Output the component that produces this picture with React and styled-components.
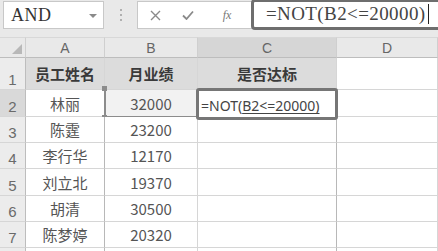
import React from "react";
import styled, { createGlobalStyle } from "styled-components";

const Global = createGlobalStyle`
  html, body { margin: 0; padding: 0; background: #ffffff; }
  body { font-family: "Noto Sans CJK SC", "Noto Sans", sans-serif; }
  * { box-sizing: border-box; }
`;

const Page = styled.div`
  width: 438px;
  height: 251px;
  overflow: hidden;
  background: #fff;
  display: flex;
  flex-direction: column;
`;

const Toolbar = styled.div`
  height: 37px;
  background: #e9e9e9;
  display: flex;
  align-items: flex-start;
  padding: 1px 0 0 3px;
  flex-shrink: 0;
`;

const NameBox = styled.div`
  width: 101px;
  height: 28px;
  background: #fff;
  border: 1px solid #c8c8c8;
  display: flex;
  align-items: center;
  justify-content: space-between;
  padding: 0 6px 0 7px;
  font-family: "Liberation Serif", serif;
  font-size: 18px;
  color: #333;
  letter-spacing: 0.5px;
`;

const Caret = styled.span`
  width: 0;
  height: 0;
  border-left: 4px solid transparent;
  border-right: 4px solid transparent;
  border-top: 4px solid #8a8a8a;
  margin-top: 1px;
`;

const Dots = styled.div`
  width: 33px;
  height: 28px;
  display: flex;
  flex-direction: column;
  align-items: center;
  justify-content: center;
  gap: 3px;
  span {
    width: 2px;
    height: 2px;
    background: #b0b0b0;
  }
`;

const FormulaArea = styled.div`
  flex: 1;
  height: 28px;
  background: #fff;
  border: 1px solid #c8c8c8;
  border-right: none;
  display: flex;
  align-items: center;
  position: relative;
`;

const IconSlot = styled.div`
  width: ${(p) => p.w}px;
  height: 28px;
  display: flex;
  align-items: center;
  justify-content: center;
  color: #8a8a8a;
`;

const Fx = styled.span`
  font-family: "Liberation Serif", serif;
  font-style: italic;
  font-size: 12px;
  color: #777;
`;

const FormulaInput = styled.div`
  flex: 1;
  height: 31px;
  margin-top: -2px;
  margin-right: -4px;
  border: 3px solid #6e6e6e;
  border-radius: 4px;
  background: #fff;
  display: flex;
  align-items: center;
  padding-left: 12px;
  font-family: "Liberation Serif", serif;
  font-size: 19px;
  letter-spacing: 0.4px;
  color: #444;
  white-space: nowrap;
`;

const TextCursor = styled.span`
  display: inline-block;
  width: 1px;
  height: 20px;
  background: #222;
  margin-left: 2px;
`;

const Sheet = styled.div`
  display: grid;
  grid-template-columns: 26px 79px 93px 139px 101px;
  grid-template-rows: 21px 32px 27px 26px 26px 27px 26px 26px 26px;
  flex: 1;
`;

const Cell = styled.div`
  position: relative;
  border-right: 1px solid ${(p) => (p.strong ? "#b8b8b8" : "#d6d6d6")};
  border-bottom: 1px solid #d6d6d6;
  display: flex;
  align-items: center;
  justify-content: center;
  font-size: 15px;
  font-weight: ${(p) => (p.bold ? 700 : 400)};
  color: ${(p) => (p.bold ? "#3a3a3a" : "#555")};
  background: ${(p) => p.bg || "#fff"};
  white-space: nowrap;
`;

const ColHead = styled.div`
  border-right: 1px solid #cfcfcf;
  border-bottom: 1px solid #bdbdbd;
  border-top: 1px solid #d8d8d8;
  background: ${(p) => (p.active ? "#d6d6d6" : "#e9e9e9")};
  display: flex;
  align-items: center;
  justify-content: center;
  font-family: "Liberation Sans", sans-serif;
  font-size: 14px;
  color: #666;
  position: relative;
`;

const Corner = styled(ColHead)`
  &::after {
    content: "";
    position: absolute;
    right: 3px;
    bottom: 3px;
    width: 0;
    height: 0;
    border-left: 10px solid transparent;
    border-bottom: 10px solid #b8b8b8;
  }
`;

const RowHead = styled.div`
  border-right: 1px solid #bdbdbd;
  border-bottom: 1px solid #d6d6d6;
  background: ${(p) => (p.active ? "#d9d9d9" : "#ececec")};
  display: flex;
  align-items: flex-end;
  justify-content: center;
  padding-bottom: 1px;
  font-family: "Liberation Sans", sans-serif;
  font-size: 15px;
  color: #6a6a6a;
`;

const RefBox = styled.div`
  position: absolute;
  left: -1px;
  top: -1px;
  right: -1px;
  bottom: -2px;
  border-left: 2px solid #8c8c8c;
  border-bottom: 2px solid #8c8c8c;
  pointer-events: none;
`;

const Handle = styled.span`
  position: absolute;
  width: 5px;
  height: 5px;
  background: #8c8c8c;
  left: -4px;
  ${(p) => (p.pos === "top" ? "top: -3px;" : "bottom: -4px;")}
`;

const EditBox = styled.div`
  position: absolute;
  left: -2px;
  top: -2px;
  right: -2px;
  bottom: -4px;
  border: 3px solid #767676;
  border-radius: 3px;
  background: #fff;
  display: flex;
  align-items: flex-end;
  padding: 0 0 2px 2px;
  font-family: "Noto Sans", sans-serif;
  font-size: 14px;
  color: #444;
  white-space: nowrap;
  z-index: 2;
`;

const Ref = styled.span`
  text-decoration: underline;
  text-underline-offset: 2px;
  padding-right: 6px;
`;

const data = [
  ["林丽", "32000"],
  ["陈霆", "23200"],
  ["李行华", "12170"],
  ["刘立北", "19370"],
  ["胡清", "30500"],
  ["陈梦婷", "20320"],
];

const XIcon = () => (
  <svg width="11" height="11" viewBox="0 0 11 11">
    <path d="M1 1L10 10M10 1L1 10" stroke="#8a8a8a" strokeWidth="1.4" fill="none" />
  </svg>
);

const CheckIcon = () => (
  <svg width="12" height="10" viewBox="0 0 12 10">
    <path d="M1 5.5L4.5 9L11 1.5" stroke="#8a8a8a" strokeWidth="1.8" fill="none" />
  </svg>
);

export default function App() {
  return (
    <Page>
      <Global />
      <Toolbar>
        <NameBox>
          AND
          <Caret />
        </NameBox>
        <Dots>
          <span />
          <span />
          <span />
        </Dots>
        <FormulaArea>
          <IconSlot w={35}>
            <XIcon />
          </IconSlot>
          <IconSlot w={30}>
            <CheckIcon />
          </IconSlot>
          <IconSlot w={48}>
            <Fx>fx</Fx>
          </IconSlot>
          <FormulaInput>
            =NOT(B2&lt;=20000)
            <TextCursor />
          </FormulaInput>
        </FormulaArea>
      </Toolbar>
      <Sheet>
        <Corner />
        <ColHead>A</ColHead>
        <ColHead>B</ColHead>
        <ColHead active>C</ColHead>
        <ColHead>D</ColHead>

        <RowHead>1</RowHead>
        <Cell bold bg="#dcdcdc">员工姓名</Cell>
        <Cell bold bg="#dcdcdc">月业绩</Cell>
        <Cell bold bg="#dcdcdc">是否达标</Cell>
        <Cell />

        {data.map(([name, val], i) => (
          <React.Fragment key={name}>
            <RowHead active={i === 0}>{i + 2}</RowHead>
            <Cell strong>{name}</Cell>
            <Cell bg={i === 0 ? "#f2f2f2" : undefined}>
              {val}
              {i === 0 && (
                <RefBox>
                  <Handle pos="top" />
                  <Handle pos="bottom" />
                </RefBox>
              )}
            </Cell>
            <Cell strong>
              {i === 0 && (
                <EditBox>
                  =NOT(<Ref>B2&lt;=20000)</Ref>
                </EditBox>
              )}
            </Cell>
            <Cell />
          </React.Fragment>
        ))}

        <RowHead />
        <Cell strong />
        <Cell />
        <Cell strong />
        <Cell />
      </Sheet>
    </Page>
  );
}
